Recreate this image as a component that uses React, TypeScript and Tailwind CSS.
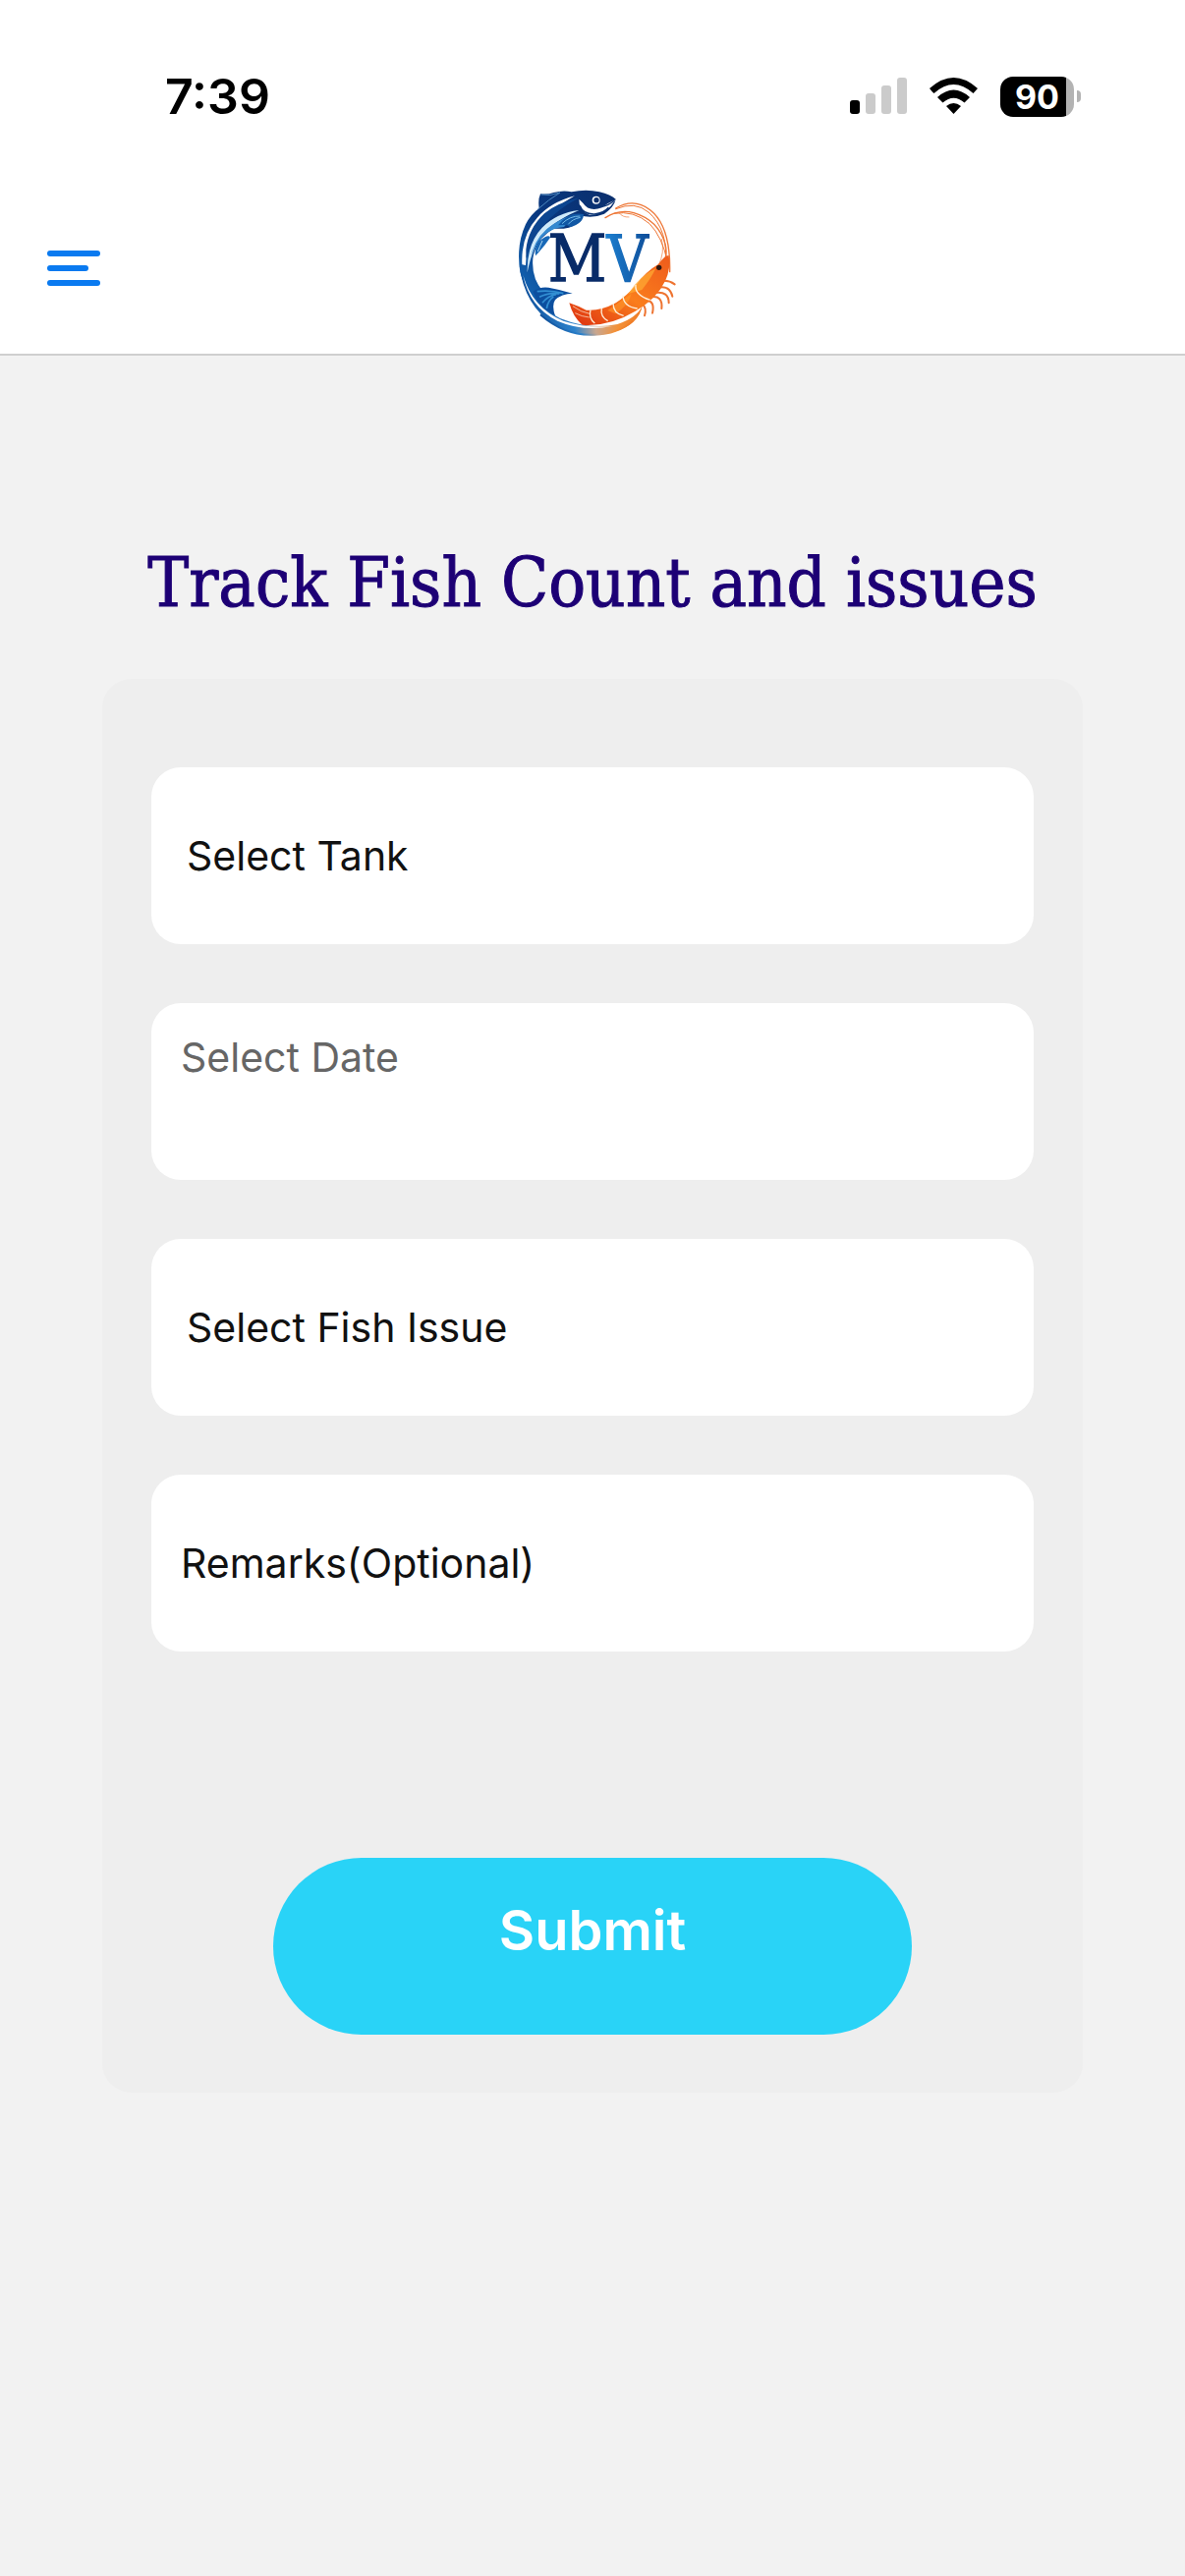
import React, { useState } from 'react';

const tanks = ['Tank 1', 'Tank 2', 'Tank 3'];
const issues = ['Disease', 'Low Oxygen', 'Mortality'];

const StatusBar: React.FC = () => (
  <div className="flex items-center justify-between h-[180px] pl-[168px] pr-[106px] pt-[16px]">
    <span className="text-[50px] leading-[60px] font-semibold text-black">7:39</span>
    <div className="flex items-center gap-[22px]">
      <svg width="58" height="38" viewBox="0 0 58 38" aria-hidden="true">
        <rect x="0" y="23" width="10" height="14" rx="3" fill="#000" />
        <rect x="16" y="16" width="10" height="21" rx="3" fill="#cbcbcb" />
        <rect x="32" y="8" width="10" height="29" rx="3" fill="#cbcbcb" />
        <rect x="48" y="0" width="10" height="37" rx="3" fill="#cbcbcb" />
      </svg>
      <svg width="51" height="38" viewBox="0 0 51 38" aria-hidden="true">
        <path d="M1 11 Q25.500 -11 50 11 L45.500 16 Q25.500 -2 5.500 16 Q4 15 1 11Z" />
        <path d="M9 20 Q25.500 5 42 20 L36.500 25.500 Q25.500 16 14.500 25.500Z" />
        <path d="M18 29 Q25.500 23 33 29 L25.500 37Z" />
      </svg>
      <div className="flex items-center gap-[3px]">
        <div className="flex items-center justify-center w-[75px] h-[41px] rounded-[13px] bg-linear-to-r from-black from-90% to-[#b3b3b3] to-90% text-white text-[34px] leading-[41px] font-bold">
          90
        </div>
        <div className="w-[4px] h-[12px] rounded-r-full bg-[#b3b3b3]" />
      </div>
    </div>
  </div>
);

const MenuIcon: React.FC = () => (
  <svg width="54" height="36" viewBox="0 0 54 36" fill="#0a7af0" aria-hidden="true">
    <rect width="54" height="6" rx="3" />
    <rect y="15" width="42" height="6" rx="3" />
    <rect y="30" width="54" height="6" rx="3" />
  </svg>
);

const Logo: React.FC = () => (
  <svg width="190" height="180" viewBox="-6 0 570 540" role="img" aria-label="MV">
    <defs>
      <linearGradient id="body" x1="0" y1="1" x2="1" y2="0">
        <stop offset="0" stopColor="#1673c4" />
        <stop offset="0.5" stopColor="#08377f" />
        <stop offset="1" stopColor="#0b2f6d" />
      </linearGradient>
      <linearGradient id="letter" gradientUnits="userSpaceOnUse" x1="310" y1="0" x2="445" y2="0">
        <stop offset="0" stopColor="#1d83d4" />
        <stop offset="1" stopColor="#0f509c" />
      </linearGradient>
      <linearGradient id="wave" x1="0" y1="0" x2="1" y2="0">
        <stop offset="0" stopColor="#0d4d98" />
        <stop offset="0.45" stopColor="#2c82cc" />
        <stop offset="0.62" stopColor="#c9a790" />
        <stop offset="0.8" stopColor="#f39138" />
        <stop offset="1" stopColor="#ef7a25" />
      </linearGradient>
      <linearGradient id="shrimp" x1="0" y1="1" x2="1" y2="0">
        <stop offset="0" stopColor="#dc2f10" />
        <stop offset="0.5" stopColor="#fa7d1c" />
        <stop offset="1" stopColor="#ee5b1c" />
      </linearGradient>
    </defs>

    {/* fish */}
    <path d="M116 96 Q112 70 120 52 Q145 54 160 48 Q190 40 215 46 Q260 36 300 46 Q335 55 350 68 Q345 92 315 113 Q280 128 240 118 Q232 150 207 155 Q185 160 160 158 Q105 190 97 250 Q92 310 128 350 L165 425 Q80 380 58 290 Q45 210 75 145 Q90 115 116 96Z" fill="url(#body)" />
    <path d="M64 268 Q60 180 110 125 Q150 78 225 58 Q150 98 110 155 Q76 205 75 270Z" fill="#fff" />
    <path d="M76 222 Q83 158 132 112 Q170 80 238 64 Q170 100 130 148 Q95 185 76 250Z" fill="#0c4590" />
    <path d="M80 292 Q78 205 125 155 Q170 110 238 102 Q190 122 150 152 Q100 190 80 292Z" fill="#cfeafa" />
    <path d="M91 240 Q108 176 160 144 Q190 124 228 113 L192 153 Q125 157 91 240Z" fill="#3389d0" />
    <path d="M238 68 Q236 102 270 117 Q308 115 334 90 L350 70 Q325 80 308 94 Q268 108 250 80Z" fill="#fff" />
    <path d="M240 88 Q250 115 285 114 Q315 110 328 94" fill="none" stroke="#0b3475" strokeWidth="5" />
    <path d="M304 92 Q325 90 346 73" fill="none" stroke="#0b3475" strokeWidth="4" />
    <circle cx="290" cy="71" r="12" fill="#fff" />
    <circle cx="291" cy="71" r="8" fill="#0b2f6d" />
    <path d="M174 148 Q205 105 252 114 Q252 142 210 154 Q205 144 174 148Z" fill="#1158a5" />
    <path d="M186 143 Q210 119 241 120 M205 145 Q217 129 242 124" fill="none" stroke="#78bce8" strokeWidth="3" />
    <path d="M116 197 Q145 173 150 185 Q130 215 105 241 Q101 215 116 197Z" fill="#1768b7" />
    <path d="M126 195 Q118 213 112 228" fill="none" stroke="#b2daf2" strokeWidth="3" />
    <path d="M122 54 Q148 60 180 48 Q145 69 112 99" fill="none" stroke="#4d88bf" strokeWidth="3" />

    {/* tail and water ring */}
    <path d="M97 350 Q120 334 145 338 Q180 344 218 356 Q185 356 165 376 Q153 392 166 428 Q118 405 97 350Z" fill="#0c4f9f" />
    <path d="M110 350 Q150 345 190 356 M117 367 Q145 352 178 357 M126 385 Q143 363 168 359 M139 402 Q143 377 160 366" fill="none" stroke="#328fd3" strokeWidth="5" />
    <path d="M55 265 Q72 380 180 432 Q270 468 355 450 Q415 430 432 392 Q420 450 350 472 Q255 502 165 454 Q70 396 55 265Z" fill="url(#wave)" />
    <path d="M67 300 Q95 400 190 440 Q260 463 340 456 Q250 474 172 440 Q86 397 67 300Z" fill="#fff" />
    <path d="M120 421 Q195 487 285 482 Q355 480 402 440" fill="none" stroke="url(#wave)" strokeWidth="6" />

    {/* antennae */}
    <g fill="none" stroke="#ee7635" strokeWidth="4" strokeLinecap="round">
      <path d="M350 96 Q405 63 455 101 Q518 150 515 290" />
      <path d="M350 98 Q410 73 450 108 Q512 162 502 270" strokeWidth="3" />
      <path d="M318 125 Q360 98 405 110 Q480 132 501 205 Q510 240 493 275" />
      <path d="M345 112 Q405 101 453 143 Q492 182 508 260" strokeWidth="3" />
      <path d="M360 110 Q370 124 390 123" strokeWidth="2" />
      <path d="M490 190 Q501 230 480 272" strokeWidth="2" />
    </g>

    {/* shrimp */}
    <g fill="none" stroke="#ee7330" strokeWidth="6" strokeLinecap="round">
      <path d="M490 318 Q512 315 530 328" />
      <path d="M480 338 Q515 330 523 365" />
      <path d="M470 354 Q512 348 512 385" />
      <path d="M457 367 Q494 361 490 402" />
      <path d="M444 379 Q470 378 462 416" />
      <path d="M432 389 Q445 400 438 424" />
    </g>
    <path d="M208 385 Q235 394 260 407 Q305 410 350 385 Q382 364 410 333 Q440 290 480 267 Q499 240 512 240 Q519 280 501 318 Q474 374 410 410 Q330 458 248 452 Q220 430 208 385Z" fill="url(#shrimp)" />
    <path d="M388 357 Q425 300 472 280 Q458 310 430 345Z" fill="#ffad35" opacity="0.700" />
    <path d="M325 408 Q366 379 398 357 Q390 391 350 418Z" fill="#ff9a2b" opacity="0.600" />
    <g fill="none" stroke="#fff0d9" strokeWidth="4">
      <path d="M273 406 Q266 431 286 447" />
      <path d="M307 402 Q302 427 326 440" />
      <path d="M342 387 Q343 418 374 424" />
      <path d="M372 362 Q373 396 416 402" />
      <path d="M411 330 Q407 361 455 376" />
      <path d="M219 395 Q243 413 270 418 M226 416 Q246 427 269 429" strokeWidth="2" />
    </g>
    <circle cx="482" cy="277" r="8" fill="#2b1712" />

    <text
      x="296"
      y="318"
      textAnchor="middle"
      className="font-['DejaVu_Serif_Condensed','DejaVu_Serif',serif]"
      fontSize="194"
      strokeWidth="4"
    >
      <tspan fill="#082b68" stroke="#082b68">M</tspan>
      <tspan fill="url(#letter)" stroke="url(#letter)">V</tspan>
    </text>
  </svg>
);

const fieldClass =
  'block w-full h-[180px] rounded-[30px] bg-white text-[41px] leading-[52px] text-[#111111] appearance-none outline-none';

interface SelectFieldProps {
  label: string;
  options: string[];
}

const SelectField: React.FC<SelectFieldProps> = ({ label, options }) => {
  const [value, setValue] = useState('');

  return (
    <select
      aria-label={label}
      value={value}
      onChange={(e) => setValue(e.target.value)}
      className={`${fieldClass} px-[36px]`}
    >
      <option value="">{label}</option>
      {options.map((option) => (
        <option key={option} value={option}>
          {option}
        </option>
      ))}
    </select>
  );
};

const App: React.FC = () => {
  return (
    <div className="min-h-screen bg-[#f2f2f2] font-[Inter,sans-serif]">
      <header className="bg-white border-b-2 border-[#cfcfcf]">
        <StatusBar />
        <div className="grid grid-cols-[1fr_auto_1fr] items-center h-[180px]">
          <button type="button" aria-label="Open menu" className="justify-self-start pl-[48px] pt-[6px]">
            <MenuIcon />
          </button>
          <Logo />
        </div>
      </header>

      <main className="px-[104px] pt-[186px]">
        <h1 className="text-center text-[70px] leading-[90px] text-[#1d0075] font-['DejaVu_Serif_Condensed','DejaVu_Serif',serif] [-webkit-text-stroke:1px_#1d0075]">
          Track Fish Count and issues
        </h1>

        <form
          className="mt-[53px] rounded-[30px] bg-[#eeeeee] px-[50px] pt-[90px] pb-[59px]"
          onSubmit={(e) => e.preventDefault()}
        >
          <div className="flex flex-col gap-[60px]">
            <SelectField label="Select Tank" options={tanks} />
            <input
              type="text"
              aria-label="Select Date"
              placeholder="Select Date"
              className={`${fieldClass} px-[30px] pb-[70px] placeholder:text-[#666666]`}
            />
            <SelectField label="Select Fish Issue" options={issues} />
            <input
              type="text"
              aria-label="Remarks"
              placeholder="Remarks(Optional)"
              className={`${fieldClass} px-[30px] placeholder:text-[#111111]`}
            />
          </div>
          <button
            type="submit"
            className="block w-[650px] max-w-full h-[180px] mx-auto mt-[210px] pb-[32px] rounded-full bg-[#29d3f7] text-white text-[56px] leading-[64px] font-semibold"
          >
            Submit
          </button>
        </form>
      </main>
    </div>
  );
};

export default App;
